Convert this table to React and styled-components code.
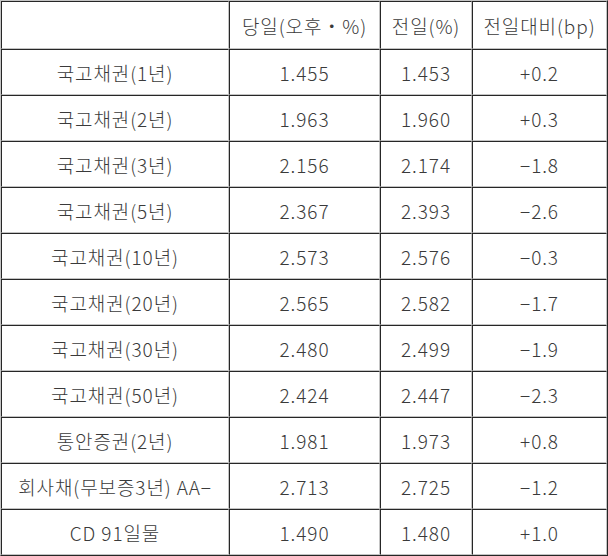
import React from 'react';
import styled, { createGlobalStyle } from 'styled-components';

const GlobalStyle = createGlobalStyle`
  html, body {
    margin: 0;
    padding: 0;
    background: #ffffff;
  }
`;

const Table = styled.table`
  border-collapse: separate;
  border-spacing: 0;
  width: 608px;
  table-layout: fixed;
  border-top: 1px solid #c4c4c4;
  border-left: 1px solid #c4c4c4;
  border-right: 1px solid #262626;
  border-bottom: 1px solid #262626;
  font-family: "Noto Sans CJK KR", "Noto Sans", sans-serif;
  font-size: 19px;
  letter-spacing: 0.9px;
  color: #3a3a3a;
`;

const Cell = styled.td`
  box-sizing: border-box;
  height: ${(p) => (p.$head ? 48 : 46)}px;
  padding: 0 2px;
  text-align: center;
  vertical-align: middle;
  white-space: nowrap;
  font-weight: 300;
  border-top: 1px solid #262626;
  border-left: 1px solid #262626;
  border-right: 1px solid #c4c4c4;
  border-bottom: 1px solid #c4c4c4;
`;

const widths = [228, 151, 92, 135];

const rows = [
  ['국고채권(1년)', '1.455', '1.453', '+0.2'],
  ['국고채권(2년)', '1.963', '1.960', '+0.3'],
  ['국고채권(3년)', '2.156', '2.174', '−1.8'],
  ['국고채권(5년)', '2.367', '2.393', '−2.6'],
  ['국고채권(10년)', '2.573', '2.576', '−0.3'],
  ['국고채권(20년)', '2.565', '2.582', '−1.7'],
  ['국고채권(30년)', '2.480', '2.499', '−1.9'],
  ['국고채권(50년)', '2.424', '2.447', '−2.3'],
  ['통안증권(2년)', '1.981', '1.973', '+0.8'],
  ['회사채(무보증3년) AA−', '2.713', '2.725', '−1.2'],
  ['CD 91일물', '1.490', '1.480', '+1.0'],
];

const head = ['', '당일(오후・%)', '전일(%)', '전일대비(bp)'];

export default function App() {
  return (
    <>
      <GlobalStyle />
      <Table>
        <colgroup>
          {widths.map((w, i) => (
            <col key={i} style={{ width: w }} />
          ))}
        </colgroup>
        <thead>
          <tr>
            {head.map((h, i) => (
              <Cell as="th" key={i} $head>
                {h}
              </Cell>
            ))}
          </tr>
        </thead>
        <tbody>
          {rows.map((r) => (
            <tr key={r[0]}>
              {r.map((v, i) => (
                <Cell key={i}>{v}</Cell>
              ))}
            </tr>
          ))}
        </tbody>
      </Table>
    </>
  );
}
